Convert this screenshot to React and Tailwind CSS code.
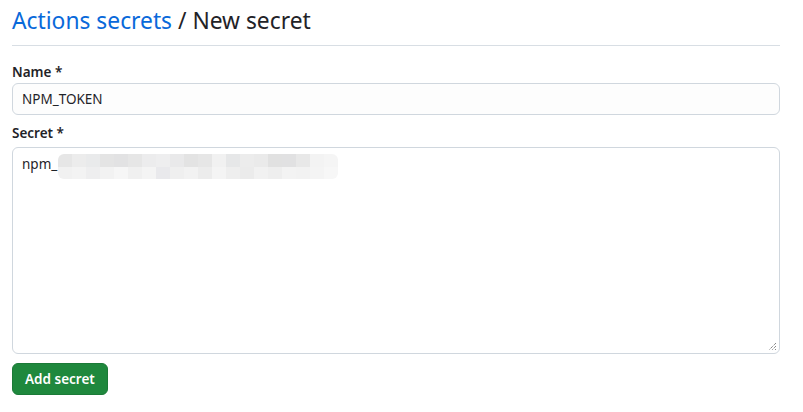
const BLUR = [
  ['#e6e6e6', '#ececec', '#e9eaeb', '#e4e4e4', '#e2e2e3', '#e6e6e6', '#ececed', '#eeeeef', '#e9e9ea', '#e3e3e3', '#e6e6e6', '#f1f1f1', '#e6e7e8', '#ececec', '#eaeaea', '#e1e1e1', '#e1e1e2', '#e8e8e8', '#f3f3f3', '#f5f5f5'],
  ['#f1f1f1', '#f3f3f3', '#eeeeef', '#f2f2f2', '#f6f6f6', '#f0f0f0', '#f4f4f4', '#e9e9ec', '#efefef', '#f2f2f2', '#ececec', '#f4f4f4', '#eeeeee', '#ebebeb', '#f1f1f1', '#eeeeee', '#f3f3f3', '#f2f2f2', '#f4f4f4', '#f7f7f7'],
]

export default function App() {
  return (
    <div className="min-h-screen bg-white pl-3 pr-[23px] pt-[5px] font-['Segoe_UI','Noto_Sans',sans-serif] text-[#1f2328]">
      <div className="border-b border-[#d8dee4] pb-[8px]">
        <h1 className="text-[22.8px] leading-[32px] font-normal">
          <a href="#" className="text-[#0969da]">Actions secrets</a>
          <span> / New secret</span>
        </h1>
      </div>

      <form className="mt-[16px]">
        <label className="block text-[13.5px] font-semibold leading-[20px]">Name *</label>
        <input
          defaultValue="NPM_TOKEN"
          className="mt-[1px] block h-[32px] w-full rounded-[6px] border border-[#d0d7de] bg-[#fdfdfd] px-[9px] text-[13.5px] text-[#1f2328] outline-none"
        />

        <label className="mt-[8px] block text-[13.5px] font-semibold leading-[20px]">Secret *</label>
        <div className="relative mt-[4px] h-[207px] w-full rounded-[6px] border border-[#d0d7de] bg-white">
          <div className="flex items-start px-[9px] pt-[6px]">
            <span className="text-[13.5px] leading-[20px]">npm_</span>
            <div className="ml-[1px] grid grid-cols-[repeat(20,14px)] overflow-hidden rounded-[6px]">
              {BLUR.map((row, r) =>
                row.map((c, i) => (
                  <div key={r + '-' + i} className={r === 0 ? 'h-[13px]' : 'h-[12px]'} style={{ background: c }} />
                ))
              )}
            </div>
          </div>
          <svg className="absolute bottom-[2px] right-[2px]" width="9" height="9" viewBox="0 0 9 9">
            <path d="M8 1L1 8M8 4L4 8M8 7L7 8" stroke="#555" strokeWidth="1" strokeDasharray="1 1" />
          </svg>
        </div>

        <button
          type="button"
          className="mt-[9px] h-[32px] rounded-[6px] border border-[#1b7a37] bg-[#1f883d] px-[12px] text-[13.5px] font-semibold text-white"
        >
          Add secret
        </button>
      </form>
    </div>
  )
}
